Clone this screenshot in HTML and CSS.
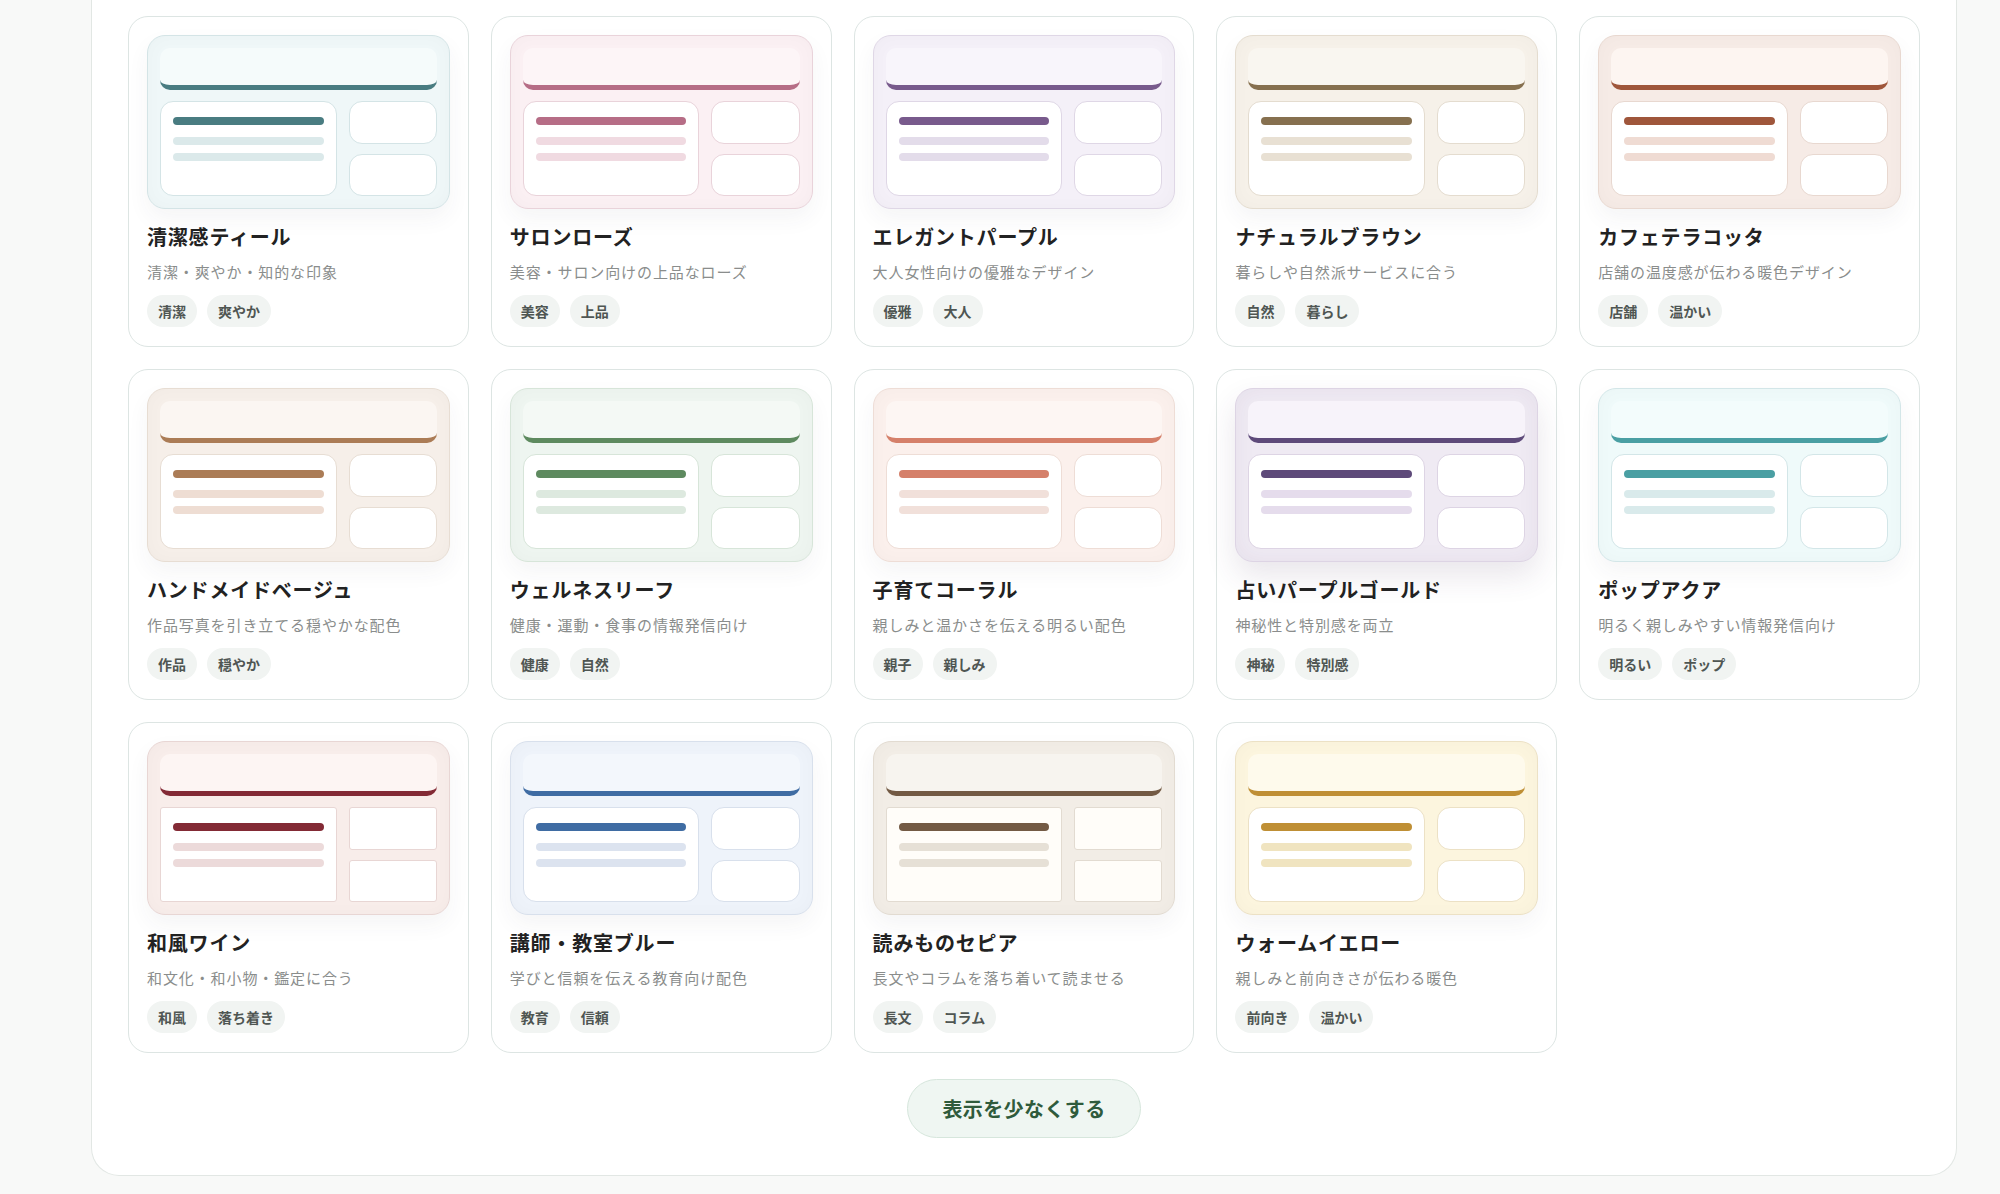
FILE: index.html
```html
<!DOCTYPE html>
<html lang="ja">
    <head>
        <meta charset="UTF-8">
        <meta name="viewport" content="width=device-width, initial-scale=1.0">
        <link rel="stylesheet" href="styles.css">
        <title>カラーテーマ</title>
    </head>
    <body>
        <div class="page">
            <section class="panel">
                <div class="theme-grid">

                    <div class="theme-card teal">
                        <div class="preview">
                            <div class="pv-head"></div>
                            <div class="pv-body">
                                <div class="pv-main"><span class="ln strong"></span><span class="ln"></span><span class="ln"></span></div>
                                <div class="pv-side"><div class="pv-box"></div><div class="pv-box"></div></div>
                            </div>
                        </div>
                        <h3 class="theme-name">清潔感ティール</h3>
                        <p class="theme-desc">清潔・爽やか・知的な印象</p>
                        <div class="tags"><span class="tag">清潔</span><span class="tag">爽やか</span></div>
                    </div>

                    <div class="theme-card rose">
                        <div class="preview">
                            <div class="pv-head"></div>
                            <div class="pv-body">
                                <div class="pv-main"><span class="ln strong"></span><span class="ln"></span><span class="ln"></span></div>
                                <div class="pv-side"><div class="pv-box"></div><div class="pv-box"></div></div>
                            </div>
                        </div>
                        <h3 class="theme-name">サロンローズ</h3>
                        <p class="theme-desc">美容・サロン向けの上品なローズ</p>
                        <div class="tags"><span class="tag">美容</span><span class="tag">上品</span></div>
                    </div>

                    <div class="theme-card purple">
                        <div class="preview">
                            <div class="pv-head"></div>
                            <div class="pv-body">
                                <div class="pv-main"><span class="ln strong"></span><span class="ln"></span><span class="ln"></span></div>
                                <div class="pv-side"><div class="pv-box"></div><div class="pv-box"></div></div>
                            </div>
                        </div>
                        <h3 class="theme-name">エレガントパープル</h3>
                        <p class="theme-desc">大人女性向けの優雅なデザイン</p>
                        <div class="tags"><span class="tag">優雅</span><span class="tag">大人</span></div>
                    </div>

                    <div class="theme-card brown">
                        <div class="preview">
                            <div class="pv-head"></div>
                            <div class="pv-body">
                                <div class="pv-main"><span class="ln strong"></span><span class="ln"></span><span class="ln"></span></div>
                                <div class="pv-side"><div class="pv-box"></div><div class="pv-box"></div></div>
                            </div>
                        </div>
                        <h3 class="theme-name">ナチュラルブラウン</h3>
                        <p class="theme-desc">暮らしや自然派サービスに合う</p>
                        <div class="tags"><span class="tag">自然</span><span class="tag">暮らし</span></div>
                    </div>

                    <div class="theme-card terracotta">
                        <div class="preview">
                            <div class="pv-head"></div>
                            <div class="pv-body">
                                <div class="pv-main"><span class="ln strong"></span><span class="ln"></span><span class="ln"></span></div>
                                <div class="pv-side"><div class="pv-box"></div><div class="pv-box"></div></div>
                            </div>
                        </div>
                        <h3 class="theme-name">カフェテラコッタ</h3>
                        <p class="theme-desc">店舗の温度感が伝わる暖色デザイン</p>
                        <div class="tags"><span class="tag">店舗</span><span class="tag">温かい</span></div>
                    </div>

                    <div class="theme-card beige">
                        <div class="preview">
                            <div class="pv-head"></div>
                            <div class="pv-body">
                                <div class="pv-main"><span class="ln strong"></span><span class="ln"></span><span class="ln"></span></div>
                                <div class="pv-side"><div class="pv-box"></div><div class="pv-box"></div></div>
                            </div>
                        </div>
                        <h3 class="theme-name">ハンドメイドベージュ</h3>
                        <p class="theme-desc">作品写真を引き立てる穏やかな配色</p>
                        <div class="tags"><span class="tag">作品</span><span class="tag">穏やか</span></div>
                    </div>

                    <div class="theme-card leaf">
                        <div class="preview">
                            <div class="pv-head"></div>
                            <div class="pv-body">
                                <div class="pv-main"><span class="ln strong"></span><span class="ln"></span><span class="ln"></span></div>
                                <div class="pv-side"><div class="pv-box"></div><div class="pv-box"></div></div>
                            </div>
                        </div>
                        <h3 class="theme-name">ウェルネスリーフ</h3>
                        <p class="theme-desc">健康・運動・食事の情報発信向け</p>
                        <div class="tags"><span class="tag">健康</span><span class="tag">自然</span></div>
                    </div>

                    <div class="theme-card coral">
                        <div class="preview">
                            <div class="pv-head"></div>
                            <div class="pv-body">
                                <div class="pv-main"><span class="ln strong"></span><span class="ln"></span><span class="ln"></span></div>
                                <div class="pv-side"><div class="pv-box"></div><div class="pv-box"></div></div>
                            </div>
                        </div>
                        <h3 class="theme-name">子育てコーラル</h3>
                        <p class="theme-desc">親しみと温かさを伝える明るい配色</p>
                        <div class="tags"><span class="tag">親子</span><span class="tag">親しみ</span></div>
                    </div>

                    <div class="theme-card fortune">
                        <div class="preview">
                            <div class="pv-head"></div>
                            <div class="pv-body">
                                <div class="pv-main"><span class="ln strong"></span><span class="ln"></span><span class="ln"></span></div>
                                <div class="pv-side"><div class="pv-box"></div><div class="pv-box"></div></div>
                            </div>
                        </div>
                        <h3 class="theme-name">占いパープルゴールド</h3>
                        <p class="theme-desc">神秘性と特別感を両立</p>
                        <div class="tags"><span class="tag">神秘</span><span class="tag">特別感</span></div>
                    </div>

                    <div class="theme-card aqua">
                        <div class="preview">
                            <div class="pv-head"></div>
                            <div class="pv-body">
                                <div class="pv-main"><span class="ln strong"></span><span class="ln"></span><span class="ln"></span></div>
                                <div class="pv-side"><div class="pv-box"></div><div class="pv-box"></div></div>
                            </div>
                        </div>
                        <h3 class="theme-name">ポップアクア</h3>
                        <p class="theme-desc">明るく親しみやすい情報発信向け</p>
                        <div class="tags"><span class="tag">明るい</span><span class="tag">ポップ</span></div>
                    </div>

                    <div class="theme-card wine square">
                        <div class="preview">
                            <div class="pv-head"></div>
                            <div class="pv-body">
                                <div class="pv-main"><span class="ln strong"></span><span class="ln"></span><span class="ln"></span></div>
                                <div class="pv-side"><div class="pv-box"></div><div class="pv-box"></div></div>
                            </div>
                        </div>
                        <h3 class="theme-name">和風ワイン</h3>
                        <p class="theme-desc">和文化・和小物・鑑定に合う</p>
                        <div class="tags"><span class="tag">和風</span><span class="tag">落ち着き</span></div>
                    </div>

                    <div class="theme-card blue">
                        <div class="preview">
                            <div class="pv-head"></div>
                            <div class="pv-body">
                                <div class="pv-main"><span class="ln strong"></span><span class="ln"></span><span class="ln"></span></div>
                                <div class="pv-side"><div class="pv-box"></div><div class="pv-box"></div></div>
                            </div>
                        </div>
                        <h3 class="theme-name">講師・教室ブルー</h3>
                        <p class="theme-desc">学びと信頼を伝える教育向け配色</p>
                        <div class="tags"><span class="tag">教育</span><span class="tag">信頼</span></div>
                    </div>

                    <div class="theme-card sepia square">
                        <div class="preview">
                            <div class="pv-head"></div>
                            <div class="pv-body">
                                <div class="pv-main"><span class="ln strong"></span><span class="ln"></span><span class="ln"></span></div>
                                <div class="pv-side"><div class="pv-box"></div><div class="pv-box"></div></div>
                            </div>
                        </div>
                        <h3 class="theme-name">読みものセピア</h3>
                        <p class="theme-desc">長文やコラムを落ち着いて読ませる</p>
                        <div class="tags"><span class="tag">長文</span><span class="tag">コラム</span></div>
                    </div>

                    <div class="theme-card yellow">
                        <div class="preview">
                            <div class="pv-head"></div>
                            <div class="pv-body">
                                <div class="pv-main"><span class="ln strong"></span><span class="ln"></span><span class="ln"></span></div>
                                <div class="pv-side"><div class="pv-box"></div><div class="pv-box"></div></div>
                            </div>
                        </div>
                        <h3 class="theme-name">ウォームイエロー</h3>
                        <p class="theme-desc">親しみと前向きさが伝わる暖色</p>
                        <div class="tags"><span class="tag">前向き</span><span class="tag">温かい</span></div>
                    </div>

                </div>
                <div class="more-row">
                    <button class="more-btn">表示を少なくする</button>
                </div>
            </section>
        </div>
    </body>
</html>
```

FILE: styles.css
```css
html, body {
    margin: 0;
    background: #f8f9f8;
    font-family: "Noto Sans CJK JP", "Noto Sans", sans-serif;
}

.page {
    padding: 0 43px 21px 91px;
}

.panel {
    background: #fff;
    border: 1px solid #e2e7e4;
    border-top: none;
    border-radius: 0 0 28px 28px;
    padding: 16px 36px 37px;
}

.theme-grid {
    display: grid;
    grid-template-columns: repeat(5, 1fr);
    gap: 22px;
}

/* card */
.theme-card {
    border: 1px solid #dde5e3;
    border-radius: 20px;
    padding: 18px 18px 19px;
    background: #fff;
}

.preview {
    background: var(--bg);
    border: 1px solid var(--edge);
    border-radius: 18px;
    padding: 12px;
    box-shadow: 0 10px 22px rgba(60, 50, 70, 0.05), inset 0 0 18px rgba(0, 0, 0, 0.025);
}

.pv-head {
    height: 37px;
    background: var(--head);
    border-bottom: 5px solid var(--accent);
    border-radius: 10px;
}

.pv-body {
    display: grid;
    grid-template-columns: 2fr 1fr;
    gap: 12px;
    margin-top: 11px;
    height: 95px;
}

.pv-main {
    background: var(--block, #fff);
    border: 1px solid var(--edge);
    border-radius: 13px;
    padding: 15px 12px;
    display: flex;
    flex-direction: column;
}

.ln {
    display: block;
    height: 8px;
    border-radius: 4px;
    background: var(--line);
    margin-top: 8px;
}

.ln.strong {
    background: var(--accent);
    margin-top: 0;
    margin-bottom: 4px;
}

.pv-side {
    display: grid;
    grid-template-rows: 1fr 1fr;
    gap: 10px;
}

.pv-box {
    background: var(--block, #fff);
    border: 1px solid var(--edge);
    border-radius: 13px;
}

.square .pv-main,
.square .pv-box {
    border-radius: 3px;
}

.theme-name {
    margin: 14px 0 0;
    font-size: 20px;
    line-height: 28px;
    font-weight: 700;
    color: #222;
    letter-spacing: 0.04em;
}

.theme-desc {
    margin: 10px 0 0;
    font-size: 15px;
    line-height: 22px;
    color: #8a8d8c;
    letter-spacing: 0.06em;
}

.tags {
    display: flex;
    gap: 10px;
    margin-top: 12px;
}

.tag {
    display: inline-block;
    height: 32px;
    line-height: 32px;
    padding: 0 11px;
    border-radius: 16px;
    background: #f1f4f2;
    color: #4f5653;
    font-size: 14px;
    font-weight: 600;
}

/* button */
.more-row {
    display: flex;
    justify-content: center;
    margin-top: 26px;
}

.more-btn {
    height: 59px;
    padding: 0 34px;
    border-radius: 30px;
    border: 1px solid #d6e6dc;
    background: #eff6f2;
    color: #2f5b3c;
    font-family: inherit;
    font-size: 20px;
    font-weight: 700;
    letter-spacing: 0.02em;
}

/* themes */
.teal { --accent: #497c81; --bg: #eff7f8; --head: #f5fbfb; --line: #dbe9ea; --edge: #d4e4e6; }
.rose { --accent: #b66d86; --bg: #fbf0f3; --head: #fdf5f7; --line: #f0dae1; --edge: #e9d3da; }
.purple { --accent: #785a8c; --bg: #f4f0f8; --head: #f8f5fb; --line: #e3dcea; --edge: #dfd7e6; }
.brown { --accent: #86704f; --bg: #f6f1e9; --head: #f9f6f0; --line: #e8e0d3; --edge: #e4dccf; }
.terracotta { --accent: #9f563b; --bg: #f6ebe6; --head: #fdf5f1; --line: #efdbd3; --edge: #e8d8d0; }
.beige { --accent: #ab7c56; --bg: #f6efe9; --head: #fbf6f2; --line: #eeddd3; --edge: #e7ddd3; }
.leaf { --accent: #5e8a5f; --bg: #eef5f0; --head: #f4f9f5; --line: #dde9df; --edge: #d7e5d9; }
.coral { --accent: #d5806a; --bg: #fbf0ec; --head: #fdf6f3; --line: #f1e0da; --edge: #eeddd6; }
.fortune { --accent: #5e4a7a; --bg: #efeaf3; --head: #f7f3fa; --line: #e5dcec; --edge: #ddd4e4; }
.aqua { --accent: #4a9fa3; --bg: #effafa; --head: #f3fcfc; --line: #d9eaeb; --edge: #d3e6e8; }
.wine { --accent: #832a35; --bg: #f8edea; --head: #fdf5f3; --line: #ecdada; --edge: #e8d6d4; }
.blue { --accent: #3f6ca3; --bg: #eef3fa; --head: #f3f7fc; --line: #dce3ef; --edge: #d8e0ec; }
.sepia { --accent: #735a44; --bg: #f2ede6; --head: #f7f4ef; --line: #e6e0d6; --edge: #e2dbd1; --block: #fffdf9; }
.yellow { --accent: #bf8f35; --bg: #fcf5de; --head: #fefaec; --line: #f0e4c0; --edge: #ece1c5; }

.fortune .preview {
    box-shadow: 0 14px 30px rgba(70, 50, 90, 0.12), inset 0 0 22px rgba(60, 40, 80, 0.05);
}
```
